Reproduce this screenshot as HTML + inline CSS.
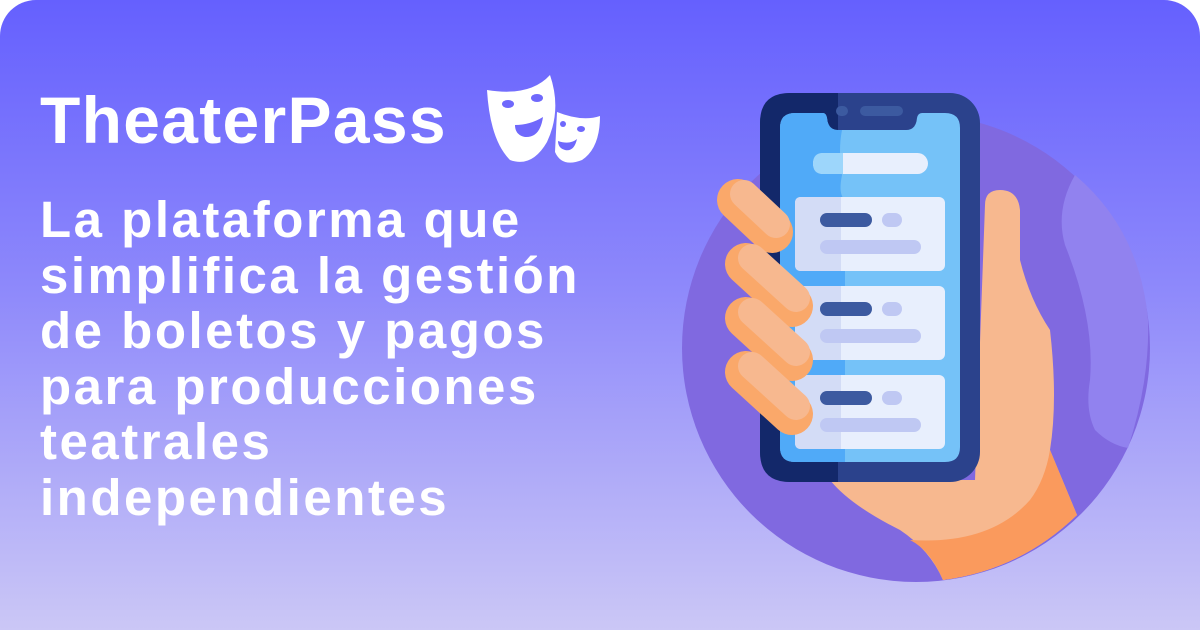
<!DOCTYPE html>
<html><head><meta charset="utf-8"><style>
html,body{margin:0;padding:0;width:1200px;height:630px;background:#fff;overflow:hidden}
.card{position:absolute;left:0;top:0;width:1200px;height:630px;border-radius:36px 36px 0 0;background:linear-gradient(180deg,#6560fe 0%,#8d88fb 45%,#cbc7f6 100%);overflow:hidden}
h1{position:absolute;left:40px;top:82px;margin:0;font:bold 66px "Liberation Sans",sans-serif;color:#fff;letter-spacing:1.3px}
p{position:absolute;left:40px;top:192px;margin:0;width:610px;font:bold 51px/55.5px "Liberation Sans",sans-serif;color:#fff;letter-spacing:2.5px}
svg{position:absolute;left:0;top:0}
</style></head><body><div class="card">
<h1>TheaterPass</h1>
<p>La plataforma que simplifica la gestión de boletos y pagos para producciones teatrales independientes</p>
<svg width="1200" height="630" viewBox="0 0 1200 630">
<g fill="#fff">
<path d="M487 90 Q530 97 550 75 Q562 110 547 142 Q532 168 510 160 Q490 140 487 90Z"/>
<path d="M557 112 Q582 122 600 116 Q600 148 582 160 Q562 168 555 152Z"/>
</g>
<g fill="#6f68fc">
<ellipse cx="508" cy="104" rx="6" ry="4"/><ellipse cx="537" cy="98" rx="6" ry="4"/>
<path d="M515 125 Q530 125 543 117 Q540 138 525 137 Q515 135 515 125Z"/>
<ellipse cx="563" cy="124" rx="3" ry="3"/><ellipse cx="581" cy="129" rx="4" ry="3"/>
<path d="M558 141 Q570 145 577 139 Q574 152 565 150 Q558 148 558 141Z"/>
</g>
<circle cx="916" cy="348" r="234" fill="#8069e0"/>
<path d="M1075 175 Q1055 210 1065 245 Q1095 320 1090 380 Q1085 410 1095 430 Q1110 445 1128 448 Q1150 380 1148 320 Q1140 230 1075 175Z" fill="#9182ef"/>
<path d="M985 205 Q985 190 1000 190 Q1018 190 1020 210 L1020 260 Q1030 300 1050 330 Q1058 400 1050 450 L1077 515 Q1020 570 943 580 Q930 550 900 530 Q850 505 830 480 L975 480Z" fill="#f7b88f"/>
<path d="M1050 450 L1077 515 Q1020 570 943 580 Q930 550 910 540 Q990 545 1030 500 Q1045 480 1050 450Z" fill="#fa9a5d"/>
<rect x="760" y="93" width="220" height="389" rx="30" fill="#2b428c"/>
<path d="M790 93 L838 93 L838 482 L790 482 Q760 482 760 452 L760 123 Q760 93 790 93Z" fill="#13286a"/>
<path d="M795 113 L823 113 Q826 113 827 118 Q828 130 838 130 L906 130 Q916 130 917 118 Q918 113 922 113 L945 113 Q960 113 960 128 L960 447 Q960 462 945 462 L795 462 Q780 462 780 447 L780 128 Q780 113 795 113Z" fill="#75c2f8"/>
<path d="M795 113 L823 113 Q826 113 827 118 Q828 130 838 130 L842 130 Q838 150 842 175 Q838 195 845 200 L845 462 L795 462 Q780 462 780 447 L780 128 Q780 113 795 113Z" fill="#50aaf8"/>
<rect x="836" y="106" width="12" height="10" rx="5" fill="#3c5aa0"/>
<rect x="860" y="106" width="43" height="10" rx="5" fill="#3c5aa0"/>
<rect x="813" y="153" width="115" height="21" rx="10.5" fill="#e8effd"/>
<path d="M823 153 L843 153 L843 174 L823 174 Q813 174 813 163.5 Q813 153 823 153Z" fill="#9dd6fb"/>
<g>
<rect x="795" y="197" width="150" height="74" rx="6" fill="#e8effd"/>
<rect x="795" y="286" width="150" height="74" rx="6" fill="#e8effd"/>
<rect x="795" y="375" width="150" height="74" rx="6" fill="#e8effd"/>
<path d="M801 197 L841 197 L841 271 L801 271 Q795 271 795 265 L795 203 Q795 197 801 197Z M801 286 L841 286 L841 360 L801 360 Q795 360 795 354 L795 292 Q795 286 801 286Z M801 375 L841 375 L841 449 L801 449 Q795 449 795 443 L795 381 Q795 375 801 375Z" fill="#d3dcf6"/>
<g fill="#3c5aa0"><rect x="820" y="213" width="52" height="14" rx="7"/><rect x="820" y="302" width="52" height="14" rx="7"/><rect x="820" y="391" width="52" height="14" rx="7"/></g>
<g fill="#bfc8f3"><rect x="882" y="213" width="20" height="14" rx="7"/><rect x="882" y="302" width="20" height="14" rx="7"/><rect x="882" y="391" width="20" height="14" rx="7"/>
<rect x="820" y="240" width="101" height="14" rx="7"/><rect x="820" y="329" width="101" height="14" rx="7"/><rect x="820" y="418" width="101" height="14" rx="7"/></g>
</g>
<g stroke-linecap="round">
<line x1="738" y1="200" x2="772" y2="232" stroke="#faa86a" stroke-width="42"/>
<line x1="744" y1="194" x2="776" y2="224" stroke="#f7b88f" stroke-width="28"/>
<line x1="746" y1="264" x2="792" y2="306" stroke="#faa86a" stroke-width="42"/>
<line x1="752" y1="258" x2="796" y2="298" stroke="#f7b88f" stroke-width="28"/>
<line x1="746" y1="318" x2="792" y2="360" stroke="#faa86a" stroke-width="42"/>
<line x1="752" y1="312" x2="796" y2="352" stroke="#f7b88f" stroke-width="28"/>
<line x1="746" y1="372" x2="792" y2="414" stroke="#faa86a" stroke-width="42"/>
<line x1="752" y1="366" x2="796" y2="406" stroke="#f7b88f" stroke-width="28"/>
</g>
</svg>
</div></body></html>
